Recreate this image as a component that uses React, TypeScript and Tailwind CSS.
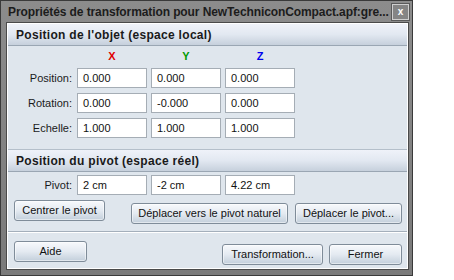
import React from "react";

const font = { fontFamily: '"Liberation Sans", Arial, sans-serif' };

const Field = ({ value }: { value: string }) => (
  <div className="h-[20px] w-[70px] border border-[#a5adb5] bg-white pl-[5px] flex items-center text-[11px] text-[#111]">
    {value}
  </div>
);

const Btn = ({ label, w }: { label: string; w: string }) => (
  <button className={`${w} h-[21px] rounded-[3px] border border-[#7f8c99] bg-gradient-to-b from-[#f7f9fc] via-[#e4eaf1] to-[#c3cfdb] text-[11px] text-[#111] shadow-[inset_0_0_0_1px_#ffffff80]`}>
    {label}
  </button>
);

const SectionHeader = ({ title }: { title: string }) => (
  <div className="h-[22px] flex items-center pl-[8px] border-b border-[#9aa6b3] bg-gradient-to-b from-[#eff2f9] via-[#e2e8f1] to-[#c6d0dc] text-[12px] tracking-[0.3px] font-bold text-[#1a1a1a]">
    {title}
  </div>
);

const Row = ({ label, values }: { label: string; values: string[] }) => (
  <div className="flex items-center">
    <div className="w-[69px] pr-[5px] text-right text-[11px] text-[#1a1a1a]">{label}</div>
    <div className="flex gap-[4px]">
      {values.map((v, i) => <Field key={i} value={v} />)}
    </div>
  </div>
);

export default function App() {
  return (
    <div className="w-[454px] h-[280px] bg-white" style={font}>
      <div className="w-[413px] h-[276px] border border-[#3a3a3a] bg-gradient-to-b from-[#8c8c8c] to-[#7a7a7a] flex flex-col">
        {/* Title bar */}
        <div className="h-[21px] shrink-0 flex items-center pl-[7px] pr-[3px]">
          <div className="flex-1 whitespace-nowrap overflow-hidden text-[12px] tracking-[-0.1px] font-bold text-[#1c1c1c]">
            Propriétés de transformation pour NewTechniconCompact.apf:gre...
          </div>
          <div className="w-[17px] h-[16px] border border-[#cfcfcf] bg-[#858585] flex items-center justify-center text-[10px] font-bold text-white leading-none outline outline-1 outline-[#5a5a5a]">
            x
          </div>
        </div>

        {/* Client area */}
        <div className="ml-[5px] mr-[3px] mb-[5px] flex-1 border border-[#4a4a4a]">
          <div className="h-full border border-white bg-[#dfe6ed] flex flex-col">
            <SectionHeader title="Position de l'objet (espace local)" />
            <div className="h-[21px] flex items-center pl-[69px] gap-[4px] text-[11px] font-bold">
              <div className="w-[70px] text-center text-[#e00000]">X</div>
              <div className="w-[70px] text-center text-[#009a00]">Y</div>
              <div className="w-[70px] text-center text-[#0000ee]">Z</div>
            </div>
            <div className="mt-[1px] flex flex-col gap-[5px]">
              <Row label="Position:" values={["0.000", "0.000", "0.000"]} />
              <Row label="Rotation:" values={["0.000", "-0.000", "0.000"]} />
              <Row label="Echelle:" values={["1.000", "1.000", "1.000"]} />
            </div>

            <div className="mt-[11px] border-t border-[#b4bfca]">
              <SectionHeader title="Position du pivot (espace réel)" />
            </div>
            <div className="mt-[3px]">
              <Row label="Pivot:" values={["2 cm", "-2 cm", "4.22 cm"]} />
            </div>
            <div className="mt-[5px] flex pl-[6px] pr-[4px]">
              <Btn label="Centrer le pivot" w="w-[91px]" />
              <div className="ml-[26px]"><Btn label="Déplacer vers le pivot naturel" w="w-[157px]" /></div>
              <div className="ml-[7px]"><Btn label="Déplacer le pivot..." w="w-[107px]" /></div>
            </div>
            <div className="mt-[7px] border-t border-[#a4afbb] border-b border-b-white" />
            <div className="mt-[8px] flex pl-[6px]">
              <Btn label="Aide" w="w-[73px]" />
              <div className="ml-[135px]"><Btn label="Transformation..." w="w-[101px]" /></div>
              <div className="ml-[6px]"><Btn label="Fermer" w="w-[73px]" /></div>
            </div>
          </div>
        </div>
      </div>
    </div>
  );
}
